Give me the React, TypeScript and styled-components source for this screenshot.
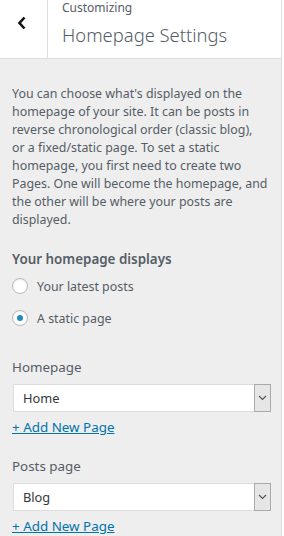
import React from "react";
import styled, { createGlobalStyle } from "styled-components";

const Global = createGlobalStyle`
  html, body { margin: 0; padding: 0; background: #fff; }
  body { font-family: "Noto Sans", "Open Sans", sans-serif; }
  * { box-sizing: border-box; }
`;

const Frame = styled.div`
  width: 284px;
  height: 536px;
  display: flex;
  overflow: hidden;
  background: #fff;
`;

const Panel = styled.div`
  width: 282px;
  height: 536px;
  background: #eee;
  border-right: 1px solid #ddd;
  display: flex;
  flex-direction: column;
`;

const Header = styled.div`
  height: 59px;
  background: #fff;
  border-bottom: 1px solid #ddd;
  display: flex;
`;

const BackButton = styled.div`
  width: 48px;
  border-right: 1px solid #ddd;
  display: flex;
  align-items: center;
  justify-content: center;
  padding-bottom: 12px;
  padding-right: 4px;
`;

const Titles = styled.div`
  padding-left: 14px;
  display: flex;
  flex-direction: column;
`;

const Crumb = styled.span`
  font-size: 12px;
  color: #555d66;
  line-height: 16px;
  margin-top: 0px;
`;

const Title = styled.h3`
  margin: 7px 0 0;
  font-size: 18.4px;
  font-weight: 300;
  color: #555d66;
  line-height: 24px;
`;

const Body = styled.div`
  padding: 26px 12px 0 12px;
  display: flex;
  flex-direction: column;
`;

const Desc = styled.p`
  margin: 0;
  font-size: 12.4px;
  line-height: 18px;
  color: #555d66;
`;

const SectionTitle = styled.div`
  margin-top: 21px;
  font-size: 13.4px;
  font-weight: 600;
  color: #555d66;
  line-height: 18px;
`;

const RadioRow = styled.label`
  display: flex;
  align-items: center;
  gap: 9px;
  height: 32px;
  font-size: 12.4px;
  color: #555d66;
`;

const RadioCircle = styled.span<{ $checked?: boolean }>`
  width: 16px;
  height: 16px;
  border-radius: 50%;
  border: 1px solid #b4b9be;
  background: #fff;
  box-shadow: inset 0 1px 2px rgba(0, 0, 0, 0.07);
  display: flex;
  align-items: center;
  justify-content: center;
  &::after {
    content: "";
    width: 6px;
    height: 6px;
    border-radius: 50%;
    background: #1e8cbe;
    display: ${(p) => (p.$checked ? "block" : "none")};
  }
`;

const Radios = styled.div`
  margin-top: 2px;
  display: flex;
  flex-direction: column;
`;

const FieldGroup = styled.div<{ $top: number }>`
  margin-top: ${(p) => p.$top}px;
  display: flex;
  flex-direction: column;
`;

const FieldLabel = styled.div`
  font-size: 13.4px;
  color: #555d66;
  line-height: 18px;
`;

const Select = styled.div`
  margin-top: 8px;
  margin-left: 1px;
  width: 258px;
  height: 28px;
  background: #fff;
  border: 1px solid #ddd;
  display: flex;
  align-items: center;
`;

const SelectValue = styled.span`
  flex: 1;
  padding-left: 9px;
  font-size: 12.8px;
  color: #32373c;
`;

const SelectArrow = styled.span`
  width: 17px;
  height: 28px;
  margin: -1px -1px -1px 0;
  border: 1px solid #aaa;
  background: #e6e6e6;
  display: flex;
  align-items: center;
  justify-content: center;
`;

const AddLink = styled.a`
  margin-top: 6px;
  font-size: 13.4px;
  color: #0073aa;
  text-decoration: underline;
  line-height: 18px;
  align-self: flex-start;
`;

const Field = ({ label, value, top }: { label: string; value: string; top: number }) => (
  <FieldGroup $top={top}>
    <FieldLabel>{label}</FieldLabel>
    <Select>
      <SelectValue>{value}</SelectValue>
      <SelectArrow>
        <svg width="9" height="6" viewBox="0 0 9 6">
          <path d="M1 1l3.5 3.5L8 1" fill="none" stroke="#555" strokeWidth="1.2" />
        </svg>
      </SelectArrow>
    </Select>
    <AddLink href="#">+ Add New Page</AddLink>
  </FieldGroup>
);

export default function App() {
  return (
    <Frame>
      <Global />
      <Panel>
        <Header>
          <BackButton>
            <svg width="10" height="14" viewBox="0 0 10 14">
              <path d="M7.5 1.5L2.5 7l5 5.5" fill="none" stroke="#111" strokeWidth="2.6" />
            </svg>
          </BackButton>
          <Titles>
            <Crumb>Customizing</Crumb>
            <Title>Homepage Settings</Title>
          </Titles>
        </Header>
        <Body>
          <Desc>
            You can choose what's displayed on the homepage of your site. It can be posts in
            reverse chronological order (classic blog),
            <br />
            or a fixed/static page. To set a static homepage, you first need to create two
            Pages. One will become the homepage, and the other will be where your posts are
            displayed.
          </Desc>
          <SectionTitle>Your homepage displays</SectionTitle>
          <Radios>
            <RadioRow>
              <RadioCircle />
              Your latest posts
            </RadioRow>
            <RadioRow>
              <RadioCircle $checked />
              A static page
            </RadioRow>
          </Radios>
          <Field label="Homepage" value="Home" top={24} />
          <Field label="Posts page" value="Blog" top={21} />
        </Body>
      </Panel>
    </Frame>
  );
}
